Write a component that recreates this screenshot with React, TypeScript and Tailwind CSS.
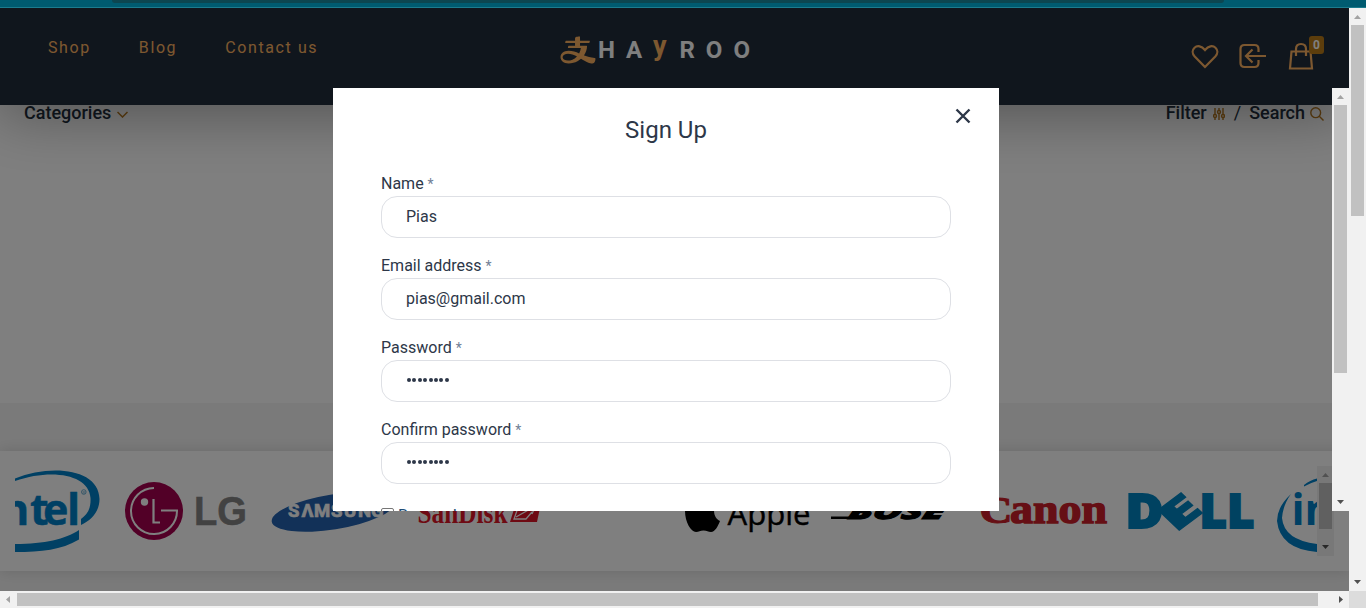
import React from "react";
import { AiOutlineAlipay } from "react-icons/ai";

const ROBOTO = "font-['Roboto','Liberation_Sans',sans-serif]";

function Arrow({ dir, color = "#505050" }: { dir: "up" | "down" | "left" | "right"; color?: string }) {
  const points = {
    up: "5,11 12,11 8.5,7",
    down: "5,6 12,6 8.5,10",
    left: "10,5 10,12 6,8.5",
    right: "7,5 7,12 11,8.5",
  }[dir];
  return (
    <svg width="17" height="17" viewBox="0 0 17 17" className="block shrink-0">
      <polygon points={points} fill={color} />
    </svg>
  );
}

function VScroll({ thumb }: { thumb: string }) {
  return (
    <div className="flex h-full w-[17px] shrink-0 flex-col items-center bg-[#f1f1f1]">
      <Arrow dir="up" color="#a3a3a3" />
      <div className={`w-[13px] bg-[#c1c1c1] ${thumb}`} />
      <div className="flex-1" />
      <Arrow dir="down" />
    </div>
  );
}

function Brands() {
  return (
    <div className="flex h-[90px] w-[1302px] overflow-hidden">
      <svg className="shrink-0" width="95" height="90" viewBox="15 466 95 90">
        <path d="M15 478.500C50 464 99 468 99.500 499C99.500 511 92 520 81 525V519C88 514 91 508 90.500 498C89 475 53 468 15 481Z" fill="#0081c8" />
        <path d="M15 544C45 544 65 539 79 530V539.500C61 550 42 552 15 552Z" fill="#0081c8" />
        <text x="1 30 43 67" y="525" fontFamily="Open Sans" fontWeight="700" fontSize="43" stroke="#0081c8" strokeWidth=".5" fill="#0081c8">ntel</text>
        <circle cx="83.800" cy="492" r="2.300" fill="none" stroke="#4b9cc8" strokeWidth=".8" />
        <text x="82.500" y="493.500" fontSize="4" fontFamily="Liberation Sans" fill="#4b9cc8">R</text>
      </svg>
      <svg className="shrink-0" width="150" height="90" viewBox="110 466 150 90">
        <circle cx="154" cy="511" r="29" fill="#a5004e" />
        <path d="M154 488A23 23 0 1 0 177 510.500H161" fill="none" stroke="#fff" strokeWidth="2" />
        <path d="M153.500 499V522.500H160" fill="none" stroke="#fff" strokeWidth="2.200" />
        <circle cx="144.500" cy="502" r="3.700" fill="#fff" />
        <text x="194" y="525" textLength="53" lengthAdjust="spacingAndGlyphs" fontFamily="Liberation Sans" fontWeight="700" fontSize="41" stroke="#848484" strokeWidth=".6" fill="#848484">LG</text>
      </svg>
      <svg className="shrink-0" width="145" height="90" viewBox="260 466 145 90">
        <ellipse cx="333" cy="512" rx="62" ry="17.500" transform="rotate(-9 333 512)" fill="#2463b0" />
        <text x="288 301.500 314 331 344 358 371" y="517" fontFamily="Liberation Sans Narrow, Roboto" fontWeight="700" fontSize="18.500" stroke="#fff" strokeWidth=".7" fill="#fff">SΛMSUNG</text>
      </svg>
      <svg className="shrink-0" width="255" height="90" viewBox="405 466 255 90">
        <text x="417.500" y="522.500" textLength="90" lengthAdjust="spacingAndGlyphs" fontFamily="Liberation Serif" fontWeight="700" fontSize="31" fill="#dd1426">SanDisk</text>
        <path d="M516 503H541L537 522H510Z" fill="#dd1426" />
        <path d="M519 505L514 519H526L532 512M516 517L532 508M524 507H535L532 514" fill="none" stroke="#fff" strokeWidth="1.300" />
      </svg>
      <svg className="shrink-0" width="160" height="90" viewBox="660 466 160 90">
        <path d="M703 502C695 498 685 501 685 511C685 522 691 532 696 532C699 532 700 530.500 703.500 530.500C707 530.500 708 532 711 532C715 532 718 526 720 521C713 518 712 507 718 504C713 498 707 501 703 502Z" fill="#000" />
        <text x="727.500" y="525" textLength="83" lengthAdjust="spacingAndGlyphs" fontFamily="Open Sans" fontSize="31" stroke="#000" strokeWidth=".4" fill="#000">Apple</text>
      </svg>
      <svg className="shrink-0" width="140" height="90" viewBox="820 466 140 90">
        <path d="M831 516.500H856V519H831Z" fill="#000" />
        <text transform="translate(847 518.500) skewX(-18)" textLength="96" lengthAdjust="spacingAndGlyphs" fontFamily="Open Sans" fontWeight="800" fontStyle="italic" fontSize="22" stroke="#000" strokeWidth="1" fill="#000">BOSE</text>
      </svg>
      <svg className="shrink-0" width="157" height="90" viewBox="960 466 157 90">
        <text x="979.500" y="523" textLength="33" lengthAdjust="spacingAndGlyphs" fontFamily="Liberation Serif" fontWeight="700" fontSize="37" stroke="#cc1f2b" strokeWidth="1" fill="#cc1f2b">C</text>
        <text x="1010" y="523" textLength="97" lengthAdjust="spacingAndGlyphs" fontFamily="Liberation Serif" fontWeight="700" fontSize="43" stroke="#cc1f2b" strokeWidth="1.500" fill="#cc1f2b">anon</text>
      </svg>
      <svg className="shrink-0" width="148" height="90" viewBox="1117 466 148 90" fontFamily="Open Sans" fontWeight="800" fontSize="47" fill="#0085c3" stroke="#0085c3">
        <text x="1125.500" y="528" textLength="38" lengthAdjust="spacingAndGlyphs" strokeWidth="2">D</text>
        <text transform="matrix(1.120 -.84 .63 .6 1175.500 533)" strokeWidth="1.500">E</text>
        <text x="1199.500 1227" y="528" strokeWidth="2">LL</text>
      </svg>
      <svg className="shrink-0" width="52" height="90" viewBox="1265 466 52 90">
        <path d="M1304 485Q1310 480 1317 478.500V481Q1310 483 1304 486.500Z" fill="#0081c8" />
        <path d="M1291 494Q1277 507 1277 521Q1280 549 1317 552V544Q1284 540 1282 518Q1283 505 1291 494Z" fill="#0081c8" />
        <text x="1291.500 1304.500" y="525" fontFamily="Open Sans" fontWeight="700" fontSize="43" fill="#0081c8">in</text>
      </svg>
    </div>
  );
}

function Field({ label, value, type = "text" }: { label: string; value: string; type?: string }) {
  return (
    <div className="mb-4">
      <label className="block h-6 text-base leading-6">
        {label} <span className="text-sm text-[#718096]">*</span>
      </label>
      <div className="flex h-[42px] items-center rounded-2xl border border-[#dee0e5] px-6">
        {type === "password" ? (
          <span className="flex gap-[1.400px] pb-[3px] pl-[1px]" aria-label="Password value">
            {value.split("").map((_, i) => (
              <i key={i} className="block size-[4px] rounded-full bg-[#2d3748]" />
            ))}
          </span>
        ) : (
          <span>{value}</span>
        )}
      </div>
    </div>
  );
}

function Header() {
  return (
    <header className="relative z-10 grid h-[97px] shrink-0 grid-cols-[560px_1fr_158px] bg-[#202d3b] text-[#fbb161] shadow-[0_10px_60px_rgba(0,0,0,0.35)]">
      <nav className="flex gap-[48px] pt-[28px] pl-12 text-base leading-6 tracking-[1.600px]">
        <span>Shop</span>
        <span>Blog</span>
        <span>Contact us</span>
      </nav>
      <div className="flex pt-[24px]">
        <AiOutlineAlipay className="-ml-[2px] h-[36px] w-[40px]" preserveAspectRatio="none" />
        <div className="flex pt-[3px] text-2xl leading-[30px] font-bold tracking-[10.800px] text-white">
          <span>HA</span>
          <span className="-translate-y-[4px] text-[27px] tracking-[13px] text-[#fbb161]">y</span>
          <span className="tracking-[11px]">ROO</span>
        </div>
      </div>
      <div className="flex gap-[20px] pt-[28px]">
        <svg width="28" height="40" viewBox="1191 36 28 40" fill="none" stroke="currentColor" strokeWidth="2.200">
          <path d="M1205 67L1194.700 56.500C1192 53.500 1192 50 1194.500 47.700C1197.500 45 1201.500 46 1205 50C1208.500 46 1212.500 45 1215.500 47.700C1218 50 1218 53.500 1215.300 56.500Z" />
        </svg>
        <svg width="28" height="40" viewBox="1239 36 28 40" fill="none" stroke="currentColor" strokeWidth="2.200">
          <path d="M1258.500 52V49Q1258.500 45 1254.500 45H1244.500Q1240.500 45 1240.500 49V63Q1240.500 67 1244.500 67H1254.500Q1258.500 67 1258.500 63V60M1266 56H1246M1252.500 49.500L1246 56L1252.500 62.500" />
        </svg>
        <svg width="37" height="40" viewBox="1287 36 37 40" className="shrink-0" fill="none" stroke="currentColor" strokeWidth="2.200">
          <path d="M1291.500 51.500H1310.500L1312 68.500H1290ZM1296 56V49Q1296 44 1301 44Q1306 44 1306 49V56" />
          <rect x="1309" y="36" width="15" height="18" rx="3" fill="#b97a18" stroke="none" />
          <text x="1316.500" y="49" textAnchor="middle" fontFamily="Roboto" fontSize="12" fontWeight="700" fill="#fff" stroke="none">0</text>
        </svg>
      </div>
    </header>
  );
}

function Toolbar() {
  return (
    <div className="flex h-4 shrink-0 items-center justify-between pr-[25px] pl-6 text-lg font-medium text-[#222f3e]">
      <div className="flex items-center gap-[6px]">
        <span>Categories</span>
        <svg width="11" height="7" viewBox="0 0 11 7" className="mt-[3px]" fill="none" stroke="#b97a20" strokeWidth="1.500">
          <path d="M.5 1L5.500 6L10.500 1" />
        </svg>
      </div>
      <div className="flex items-center">
        <span>Filter</span>
        <svg width="12" height="12" viewBox="0 0 12 12" className="mt-[2px] ml-[6px]" fill="none" stroke="#b97a20" strokeWidth="1.400">
          <path d="M2 0V6M2 10V12M6 0V2M6 6V12M10 0V6M10 10V12" />
          <circle cx="2" cy="8" r="1.500" />
          <circle cx="6" cy="4" r="1.500" />
          <circle cx="10" cy="8" r="1.500" />
        </svg>
        <span className="ml-[9px] font-normal">/</span>
        <span className="ml-[8px]">Search</span>
        <svg width="14" height="14" viewBox="0 0 14 14" className="mt-[2px] ml-[5px]" fill="none" stroke="#b97a20" strokeWidth="1.400">
          <circle cx="5.700" cy="5.700" r="4.900" />
          <path d="M9.300 9.300L13.500 13.500" />
        </svg>
      </div>
    </div>
  );
}

export default function App() {
  return (
    <div className={`flex h-[608px] w-[1366px] flex-col overflow-hidden bg-white ${ROBOTO}`}>
      <div className="h-[8px] shrink-0 overflow-hidden border-b border-[#1c7c8e] bg-[#005b70] pl-[112px]">
        <div className="h-[3px] w-[1112px] rounded-b-full bg-[#0d4650]" />
      </div>
      <div className="flex h-[583px]">
        <main className="relative flex w-[1349px] flex-col overflow-hidden">
          <Header />
          <Toolbar />
          <div className="h-[282px] shrink-0" />
          <div className="h-[48px] shrink-0 bg-[#f5f5f5]" />
          <section className="relative flex h-[120px] shrink-0 bg-white py-[15px] pl-[15px] shadow-[0_0_14px_rgba(0,0,0,0.14)]">
            <Brands />
            <VScroll thumb="h-[46px]" />
          </section>
          <div className="flex-1 bg-[#f5f5f5]" />

          <div className="absolute inset-0 z-20 bg-black/50" />
          <div className="absolute inset-x-0 top-[80px] z-30 flex h-[423px]">
            <div className="flex flex-1 justify-center overflow-hidden">
              <form className="relative h-[423px] w-[666px] overflow-hidden bg-white px-12 pt-6 text-[#2d3748]">
                <svg width="16" height="16" viewBox="0 0 16 16" className="absolute top-[20px] right-[28px]" fill="none" stroke="#2d3748" strokeWidth="2.400">
                  <path d="M1.500 1.500L14.500 14.500M14.500 1.500L1.500 14.500" />
                </svg>
                <h2 className="mb-6 text-center text-2xl leading-9">Sign Up</h2>
                <Field label="Name" value="Pias" />
                <Field label="Email address" value="pias@gmail.com" />
                <Field label="Password" value="12345678" type="password" />
                <Field label="Confirm password" value="12345678" type="password" />
                <div className="flex pt-[4px] leading-6 text-[#204d77]">
                  <span className="mt-[4px] mr-1 size-[13px] rounded-[2px] border border-[#767676]" />
                  <span>Remember me</span>
                </div>
              </form>
            </div>
            <VScroll thumb="h-[268px]" />
          </div>
        </main>
        <VScroll thumb="h-[191px]" />
      </div>
      <div className="flex h-[17px] shrink-0 items-center bg-[#f1f1f1]">
        <Arrow dir="left" color="#a3a3a3" />
        <div className="h-[13px] w-[1301px] bg-[#c1c1c1]" />
        <div className="flex-1" />
        <Arrow dir="right" />
        <div className="h-full w-[17px] bg-[#dcdcdc]" />
      </div>
    </div>
  );
}
